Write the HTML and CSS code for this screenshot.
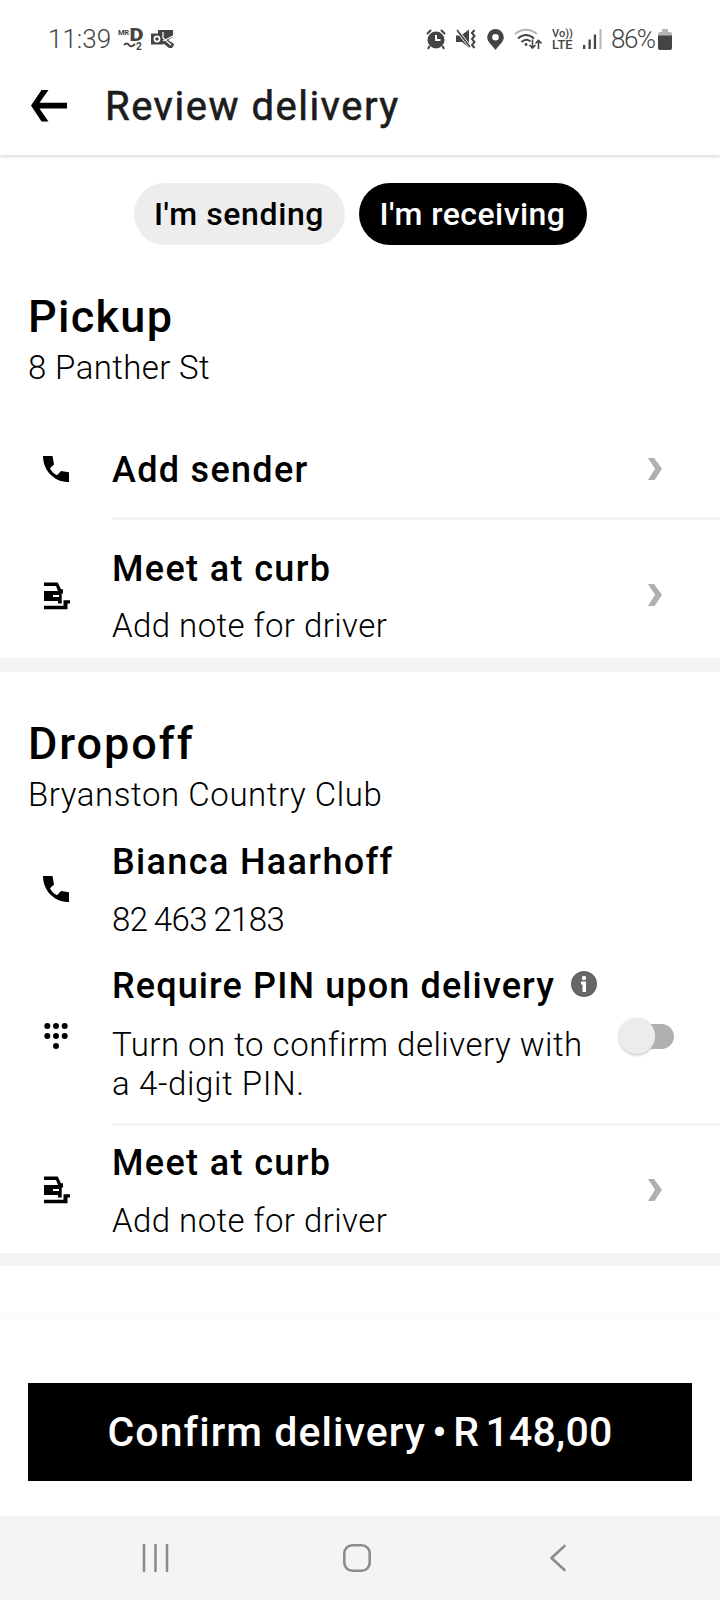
FILE: index.html
```html
<!DOCTYPE html>
<html lang="en">
<head>
<meta charset="utf-8">
<title>Review delivery</title>
<link rel="stylesheet" href="styles.css">
</head>
<body>
<svg width="0" height="0" class="defs">
  <symbol id="phone" viewBox="0 0 26 26"><path d="M0 0H9.500L11 8.500L7 12.300C8.500 15.300 11 18 14 19.300L18 15L26 16.300V26C12 26.500 0 15 0 0Z"/></symbol>
  <symbol id="curb" viewBox="0 0 26 28"><path d="M0 0.500H13.700L17 7.300H19V11.500H17.700V21.500H14V19H0V9H14L12 4H0ZM9 13V15H15V13Z" fill-rule="evenodd"/><path d="M0 23.800H19.500V18.200H26V21.500H23.500V27.300H0Z"/></symbol>
  <symbol id="chevron" viewBox="0 0 14 22"><path d="M0 0H6L14 10.800L6.500 22H0L7 10.800Z"/></symbol>
</svg>
<div class="screen">
  <div class="status">
    <span class="clock">11:39</span>
    <svg class="mrd" viewBox="0 0 26 28"><text x="0" y="10" font-size="7.500" font-weight="700" textLength="11">MR</text><text x="11.500" y="16" font-size="17.500" font-weight="900" textLength="14" lengthAdjust="spacingAndGlyphs">D</text><path d="M6 20q3-3 5 0t6-1" fill="none" stroke="#444" stroke-width="2"/><text x="18" y="25" font-size="10" font-weight="700">2</text></svg>
    <svg class="outlook" viewBox="0 0 24 20"><path d="M7 1H22V8L17 11L23 15V16L21 19H18L13 15H7Z" fill="#444"/><rect x="0" y="4.500" width="12" height="11" fill="#444"/><circle cx="6" cy="10" r="2.600" fill="none" stroke="#fff" stroke-width="1.600"/><path d="M12 3V9L20 16M12 12L22 7" fill="none" stroke="#fff" stroke-width="1.300"/></svg>
    <span class="spacer"></span>
    <svg class="alarm" viewBox="0 0 20 21"><circle cx="10" cy="11" r="8.500"/><path d="M1 5L5 1M19 5L15 1M3.500 17L2 20M16.500 17L18 20" stroke="#444" stroke-width="2"/><path d="M10 6V11H14.500" fill="none" stroke="#fff" stroke-width="2"/></svg>
    <svg class="mute" viewBox="0 0 20 20"><path d="M0 6.500H5L13 0.500V19L6 13H0Z"/><path d="M1 1L14 18" stroke="#fff" stroke-width="3"/><path d="M1 1L14 18" stroke="#444" stroke-width="1.600"/><path d="M18.500 1L16 4L18.500 7L16 10L18.500 13L16 16L18.500 19" fill="none" stroke="#444" stroke-width="2"/></svg>
    <svg class="pin" viewBox="0 0 17 21"><path fill-rule="evenodd" d="M8.500 0A8.300 8.300 0 0 0 0.200 8.300C0.200 13 5 16 8.500 21C12 16 16.800 13 16.800 8.300A8.300 8.300 0 0 0 8.500 0ZM8.500 5A3.300 3.300 0 1 1 8.500 11.600A3.300 3.300 0 1 1 8.500 5Z"/></svg>
    <svg class="wifi" viewBox="0 0 28 22"><g fill="none" stroke="#444" stroke-width="1.900"><path d="M1 6Q12-2.500 23 6" stroke="#b5b5b5"/><path d="M4 10.500Q12 3.500 20 10.500M7.500 14Q12 9.800 16.500 13.500"/><path d="M18.500 11.500V20M15.500 17L18.500 20L21.500 17M24.500 21V12.500M21.500 15.500L24.500 12.500L27.500 15.500" stroke-width="1.600"/></g><circle cx="12" cy="16.500" r="1.400"/></svg>
    <svg class="volte" viewBox="0 0 22 28"><text x="0" y="12" font-size="11.500" font-weight="500" textLength="21" lengthAdjust="spacingAndGlyphs">Vo))</text><text x="0" y="24" font-size="12" font-weight="500" textLength="20.500" lengthAdjust="spacingAndGlyphs">LTE</text></svg>
    <svg class="signal" viewBox="0 0 20 20"><path d="M0 16H2.300V20H0ZM5.500 10.500H7.800V20H5.500ZM10.800 5.500H13.100V20H10.800Z"/><path d="M16.500 0H18.500V20H16.500Z" fill="#b5b5b5"/></svg>
    <span class="percent">86%</span>
    <svg class="battery" viewBox="0 0 14 21"><path d="M0 7V5Q0 3 2 3H4V0H10V3H12Q14 3 14 5V7Z" fill="#b5b5b5"/><path d="M0 6.500H14V19Q14 21 12 21H2Q0 21 0 19Z"/></svg>
  </div>
  <header class="header">
    <svg class="back" viewBox="0 0 36 32"><path d="M10.500 0H17.500L8.500 12.800H36V18.400H8.500L17.500 31.500H10.500L0 15.600Z"/></svg>
    <h1>Review delivery</h1>
  </header>
  <main>
    <div class="tabs">
      <button class="tab sending">I'm sending</button>
      <button class="tab receiving">I'm receiving</button>
    </div>
    <section class="section">
      <h2 class="t-pickup">Pickup</h2>
      <p class="place t-panther">8 Panther St</p>
      <div class="row add">
        <svg class="ico"><use href="#phone"/></svg>
        <div class="body"><h3 class="t-add">Add sender</h3></div>
        <svg class="go"><use href="#chevron"/></svg>
      </div>
      <div class="divider"></div>
      <div class="row meet">
        <svg class="ico curb"><use href="#curb"/></svg>
        <div class="body"><h3 class="t-meet">Meet at curb</h3><p class="t-note">Add note for driver</p></div>
        <svg class="go"><use href="#chevron"/></svg>
      </div>
    </section>
    <section class="section">
      <h2 class="t-dropoff">Dropoff</h2>
      <p class="place t-club">Bryanston Country Club</p>
      <div class="row contact">
        <svg class="ico"><use href="#phone"/></svg>
        <div class="body"><h3 class="t-name">Bianca Haarhoff</h3><p class="t-num">82 463 2183</p></div>
      </div>
      <div class="row code">
        <svg class="ico dots" viewBox="0 0 26 28"><g><circle cx="3.300" cy="4" r="3"/><circle cx="12" cy="4" r="3"/><circle cx="20.700" cy="4" r="3"/><circle cx="3.300" cy="14" r="3"/><circle cx="12" cy="14" r="3"/><circle cx="20.700" cy="14" r="3"/><circle cx="12" cy="24" r="3"/></g></svg>
        <div class="body">
          <h3 class="t-req">Require PIN upon delivery<svg class="info" viewBox="0 0 26 26"><circle cx="13" cy="13" r="13" fill="#666"/><circle cx="13" cy="7" r="2.200" fill="#fff"/><path d="M10 10.500H15V21H11.500V13.500H10Z" fill="#fff"/></svg></h3>
          <p><span class="t-turn">Turn on to confirm delivery with</span><br><span class="t-digit">a 4-digit PIN.</span></p>
        </div>
        <span class="toggle"><span class="thumb"></span></span>
      </div>
      <div class="divider"></div>
      <div class="row meet last">
        <svg class="ico curb"><use href="#curb"/></svg>
        <div class="body"><h3 class="t-meet">Meet at curb</h3><p class="t-note">Add note for driver</p></div>
        <svg class="go"><use href="#chevron"/></svg>
      </div>
    </section>
  </main>
  <footer class="footer"><button class="confirm">Confirm delivery<span class="price"> • R 148,00</span></button></footer>
  <nav class="nav">
    <svg viewBox="0 0 28 30"><path d="M2 2V28M13.500 2V28M25 2V28"/></svg>
    <svg viewBox="0 0 30 30"><rect x="2.300" y="2.300" width="25.400" height="25.400" rx="8"/></svg>
    <svg viewBox="0 0 28 30"><path d="M19.500 3L6.500 15L19.500 27"/></svg>
  </nav>
</div>
</body>
</html>
```
FILE: styles.css
```css
* { box-sizing: border-box; }
body { margin: 0; background: #fff; color: #000; font-family: Roboto, "Liberation Sans", sans-serif; }
h1, h2, h3, p { margin: 0; white-space: nowrap; }
button { border: 0; padding: 0; font: inherit; white-space: nowrap; }
svg { display: block; flex: none; }
.defs { position: absolute; }
.screen { width: 720px; height: 1600px; display: flex; flex-direction: column; overflow: hidden; }

.status { height: 58px; padding: 20px 48px 0 48px; display: flex; align-items: center; color: #444; fill: #444; }
.clock { font-size: 26px; font-weight: 300; width: 62px; }
.mrd { width: 26px; height: 28px; margin-left: 8px; }
.outlook { width: 24px; height: 20px; margin-left: 7px; }
.spacer { flex: 1; }
.alarm { width: 20px; height: 21px; }
.mute { width: 20px; height: 20px; margin-left: 10px; }
.pin { width: 17px; height: 21px; margin-left: 11px; }
.wifi { width: 28px; height: 22px; margin-left: 10px; }
.volte { width: 22px; height: 28px; margin-left: 10px; }
.signal { width: 20px; height: 20px; margin-left: 9px; }
.percent { font-size: 26px; font-weight: 300; width: 47px; margin-left: 8px; letter-spacing: -1.500px; }
.battery { width: 14px; height: 21px; }

.header { height: 97px; display: flex; align-items: center; padding-left: 31px; position: relative; box-shadow: 0 2px 3px #ddd; }
.back { width: 36px; height: 32px; margin-bottom: 2px; }
h1 { font-size: 40px; font-weight: 400; line-height: 48px; margin-left: 38px; color: #1c1c1c; -webkit-text-stroke: 0.600px #1c1c1c; letter-spacing: 1.500px; }

main { flex: none; height: 1157px; padding-top: 28px; }
.tabs { display: flex; justify-content: center; gap: 14px; height: 62px; }
.tab { border-radius: 31px; font-size: 32px; font-weight: 500; }
.sending { width: 211px; background: #ededed; color: #000; letter-spacing: 0.600px; }
.receiving { width: 228px; background: #000; color: #fff; letter-spacing: 0.450px; }

.section { padding-top: 47px; border-bottom: 14px solid #f4f4f4; }
.section + .section { border-bottom-width: 13px; }
h2 { font-size: 45px; line-height: 50px; font-weight: 500; padding-left: 28px; }
p { font-size: 33px; line-height: 40px; font-weight: 300; }
.place { margin-top: 6px; padding-left: 28px; }
h3 { font-size: 36px; line-height: 44px; font-weight: 500; display: flex; align-items: center; }

.t-pickup { letter-spacing: 1.300px; }
.t-dropoff { letter-spacing: 1.950px; }
.t-panther { letter-spacing: 0.380px; }
.t-add { letter-spacing: 1.300px; }
.t-meet { letter-spacing: 1.350px; }
.t-note { letter-spacing: 0.430px; }
.t-club { letter-spacing: 0.570px; }
.t-name { letter-spacing: 1.350px; }
.t-num { letter-spacing: -0.600px; word-spacing: -1px; }
.t-req { letter-spacing: 1.120px; }
.t-turn { letter-spacing: 0.500px; }
.t-digit { letter-spacing: 0.620px; }

.row { display: flex; align-items: center; padding-left: 43px; padding-right: 58px; }
.body { flex: 1; margin-left: 43px; }
.body p { margin-top: 15px; }
.ico { width: 26px; height: 26px; margin-bottom: 2px; }
.ico.curb { height: 28px; margin-left: 1px; margin-right: -1px; }
.ico.dots { height: 28px; margin-left: 1px; margin-right: -1px; margin-bottom: -5px; }
.go { width: 14px; height: 22px; fill: #b0b0b0; margin-bottom: 3px; }
.divider { height: 3px; margin-left: 112px; background: #f4f4f4; }
.add { height: 95px; margin-top: 34px; }
.add .go, .add .ico { margin-bottom: 1px; }
.meet { height: 138px; padding-top: 27px; padding-bottom: 12px; }
.meet.last { height: 127px; padding-top: 15px; padding-bottom: 12px; }
.meet.last p { margin-top: 16px; }
.meet.last .go { margin-bottom: 2px; }
.contact { padding-top: 25px; }
.contact p { margin-top: 16px; }
.code { padding-top: 24px; padding-bottom: 20px; padding-right: 46px; }
.code p { line-height: 39px; margin-top: 17px; }
.info { width: 26px; height: 26px; margin-left: 16px; margin-top: -4px; }
.toggle { width: 48px; height: 25px; border-radius: 13px; background: #b0b0b0; margin-top: 5px; position: relative; }
.thumb { position: absolute; left: -7px; top: -6px; width: 36px; height: 36px; border-radius: 50%; background: #ececec; box-shadow: 0 1px 3px #bbb; }

.footer { flex: none; height: 204px; border-top: 7px solid #fafafa; padding: 64px 28px 0; }
.confirm { display: block; width: 664px; height: 98px; background: #000; color: #fff; font-size: 41px; font-weight: 500; letter-spacing: 1.080px; }
.price { letter-spacing: 0.200px; word-spacing: -4px; }
.nav { flex: none; height: 84px; background: #f4f4f4; display: flex; align-items: center; padding: 0 0 0 142px; }
.nav svg { width: 28px; height: 30px; fill: none; stroke: #8c8c8c; stroke-width: 2.600; stroke-linecap: round; stroke-linejoin: round; }
.nav svg:nth-child(2) { width: 30px; margin-left: 172px; }
.nav svg:nth-child(3) { margin-left: 173px; }
```
